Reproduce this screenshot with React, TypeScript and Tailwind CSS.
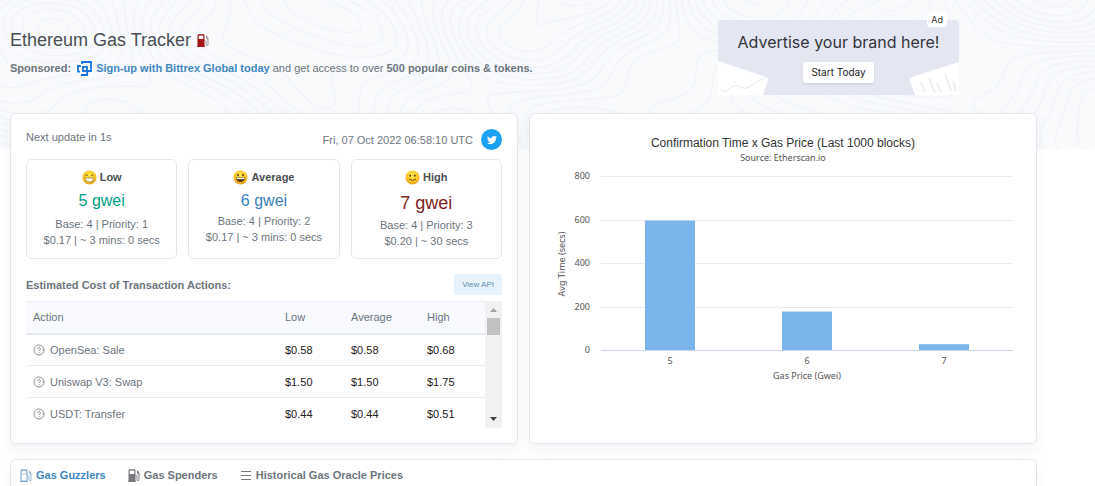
import { CircleHelp } from 'lucide-react'
import { FaTwitter } from 'react-icons/fa'

const oracle = [
  {
    label: 'Low',
    mood: 'beaming',
    price: '5 gwei',
    priceClass: 'mb-[3px] text-base leading-6 text-[#00a186]',
    base: 'Base: 4 | Priority: 1',
    cost: '$0.17 | ~ 3 mins: 0 secs',
  },
  {
    label: 'Average',
    mood: 'grinning',
    price: '6 gwei',
    priceClass: 'text-base leading-6 text-[#3a80ba]',
    base: 'Base: 4 | Priority: 2',
    cost: '$0.17 | ~ 3 mins: 0 secs',
  },
  {
    label: 'High',
    mood: 'smiling',
    price: '7 gwei',
    priceClass: 'text-lg leading-7 text-[#7d2323]',
    base: 'Base: 4 | Priority: 3',
    cost: '$0.20 | ~ 30 secs',
  },
]

const actions = [
  { name: 'OpenSea: Sale', low: '$0.58', average: '$0.58', high: '$0.68' },
  { name: 'Uniswap V3: Swap', low: '$1.50', average: '$1.50', high: '$1.75' },
  { name: 'USDT: Transfer', low: '$0.44', average: '$0.44', high: '$0.51' },
]

const confirmations = [
  { gwei: 5, secs: 595 },
  { gwei: 6, secs: 177 },
  { gwei: 7, secs: 27 },
]

const TERRAIN = { width: 1100, height: 150, cell: 5 }

function elevation(x: number, y: number) {
  return (
    Math.sin(x / 71 + Math.sin(y / 57) * 1.3) * 2.1 +
    Math.cos(y / 49 - x / 87) * 2 +
    Math.sin((x + y) / 41) * 0.7 +
    Math.cos((x - 2 * y) / 33) * 0.5
  )
}

// marching squares over the elevation field
function contourPath() {
  const { width, height, cell } = TERRAIN
  let d = ''
  for (let x = 0; x < width; x += cell) {
    for (let y = 0; y < height; y += cell) {
      const corners = [
        [x, y],
        [x + cell, y],
        [x + cell, y + cell],
        [x, y + cell],
      ]
      const heights = corners.map(([cx, cy]) => elevation(cx, cy))
      for (let level = -5; level <= 5; level += 0.5) {
        const hits: string[] = []
        for (let i = 0; i < 4; i++) {
          const j = (i + 1) % 4
          if (heights[i] < level !== heights[j] < level) {
            const t = (level - heights[i]) / (heights[j] - heights[i])
            const px = corners[i][0] + (corners[j][0] - corners[i][0]) * t
            const py = corners[i][1] + (corners[j][1] - corners[i][1]) * t
            hits.push(`${px.toFixed(1)} ${py.toFixed(1)}`)
          }
        }
        for (let i = 0; i + 1 < hits.length; i += 2) d += `M${hits[i]}L${hits[i + 1]}`
      }
    }
  }
  return d
}

const contours = contourPath()

function Topography() {
  return (
    <svg
      aria-hidden="true"
      className="absolute inset-0 h-full w-full"
      viewBox="0 0 1095 149"
      preserveAspectRatio="xMidYMid slice"
    >
      <path d={contours} fill="none" stroke="#f1f3f6" strokeWidth="1.2" />
    </svg>
  )
}

function PumpIcon({ body, hose, filled }: { body: string; hose: string; filled?: boolean }) {
  return (
    <svg aria-hidden="true" width="12" height="13" viewBox="0 0 12 13" fill="none">
      <path d="M1 .8h6v11.4H1z" fill={filled ? body : 'none'} stroke={body} />
      <path d="M1.7 1.6h4.6v3.4H1.7z" fill="#fff" stroke={filled ? 'none' : body} strokeWidth=".6" />
      <path d="M0 12.3h8" stroke={body} />
      <path
        d="M7.5 6.5h.8q.7 0 .7.8v3.3q0 1 1 1t1-1V4.2L9.2 1.6M9.5 2v2.4q0 .8 1.5.8"
        stroke={hose}
        strokeWidth=".8"
      />
    </svg>
  )
}

function BittrexLogo() {
  return (
    <svg
      aria-hidden="true"
      className="shrink-0"
      width="15"
      height="15"
      viewBox="0 0 15 15"
      fill="none"
      stroke="#1673e0"
      strokeWidth="1.8"
    >
      <path d="M5 3V1h9v9H6V5.8h4V10" />
      <path d="M3.8 5H1v5.6h2M4 14h6.2v-3" />
    </svg>
  )
}

function Emoji({ mood }: { mood: string }) {
  return (
    <svg aria-hidden="true" width="15" height="15" viewBox="0 0 15 15">
      <defs>
        <radialGradient id={`face-${mood}`} cx=".5" cy=".35" r=".65">
          <stop offset="0" stopColor="#ffe94f" />
          <stop offset=".6" stopColor="#fbc928" />
          <stop offset="1" stopColor="#e79a1d" />
        </radialGradient>
      </defs>
      <circle cx="7.5" cy="7.5" r="7" fill={`url(#face-${mood})`} />
      {mood === 'beaming' && (
        <>
          <path
            d="M3.4 5.6q1.3-1.7 2.7 0M8.9 5.6q1.3-1.7 2.7 0"
            fill="none"
            stroke="#5b4015"
            strokeWidth=".8"
          />
          <path d="M3.2 8h8.6q-.5 4-4.3 4T3.2 8z" fill="#fff" stroke="#8b6a2b" strokeWidth=".6" />
        </>
      )}
      {mood === 'grinning' && (
        <>
          <ellipse cx="5" cy="5" rx=".8" ry="1.2" fill="#4a3415" />
          <ellipse cx="10" cy="5" rx=".8" ry="1.2" fill="#4a3415" />
          <path d="M2.8 7.6h9.4q-.5 4.4-4.7 4.4T2.8 7.6z" fill="#5b3512" />
          <path d="M3.6 7.8h7.8v1.3H3.6z" fill="#fff" />
        </>
      )}
      {mood === 'smiling' && (
        <>
          <ellipse cx="5.3" cy="5.6" rx=".8" ry="1.2" fill="#4a3415" />
          <ellipse cx="9.7" cy="5.6" rx=".8" ry="1.2" fill="#4a3415" />
          <path d="M4 9q3.5 2.8 7 0" fill="none" stroke="#5b3f14" strokeWidth=".9" />
        </>
      )}
    </svg>
  )
}

function AdBanner() {
  return (
    <aside className="relative mr-[78px] flex h-[75px] w-[241px] shrink-0 flex-col items-center rounded-sm bg-[#e4e7f2] pt-3 font-['Inter',sans-serif]">
      <svg
        aria-hidden="true"
        className="absolute inset-0"
        width="241"
        height="75"
        viewBox="0 0 241 75"
        fill="none"
      >
        <path d="M0 41l48 16q3 1 2 3l-5 15H0z" fill="#fff" />
        <path d="M2 69q5 5 9 0 6-6 11-2 5 3 9 0 5-5 16-9" stroke="#e7e9f0" />
        <path d="M241 42l-47 15q-3 1-2 4l5 14h44z" fill="#fff" />
        <path d="M203 62l4 10M211 58l6 15M219 63l4 10M227 53l6 18M235 61l3 10" stroke="#eceef4" strokeWidth="2" />
      </svg>
      <span className="absolute -top-2 right-3 rounded bg-white px-1 text-[9px] leading-[15px] text-[#333]">
        Ad
      </span>
      <p className="relative text-base leading-5 text-[#33343c]">Advertise your brand here!</p>
      <a
        href="#advertise"
        className="relative mt-[10px] rounded-xs bg-white px-2 text-[10px] leading-[21px] text-[#222] shadow-sm"
      >
        Start Today
      </a>
    </aside>
  )
}

function GasOracle() {
  return (
    <section className="rounded-md border border-[#e3e7ed] bg-white p-[15px] shadow-[0_6px_12px_rgba(189,197,209,0.2)]">
      <div className="flex items-start justify-between">
        <p className="leading-4">Next update in 1s</p>
        <div className="flex items-center gap-2">
          <time>Fri, 07 Oct 2022 06:58:10 UTC</time>
          <a
            href="#tweet"
            aria-label="Share on Twitter"
            className="flex size-[21px] items-center justify-center rounded-full bg-[#1da1f2] text-white"
          >
            <FaTwitter size={10} />
          </a>
        </div>
      </div>

      <div className="mt-[9px] grid grid-cols-3 gap-[11px]">
        {oracle.map((tier) => (
          <div
            key={tier.label}
            className="rounded-md border border-[#e3e7ed] pt-2 pb-[9px] text-center leading-4"
          >
            <h2 className="mb-[3px] flex h-[18px] items-center justify-center gap-[3px] font-bold text-[#4a4f55]">
              <Emoji mood={tier.mood} />
              {tier.label}
            </h2>
            <p className={tier.priceClass}>{tier.price}</p>
            <p>{tier.base}</p>
            <p>{tier.cost}</p>
          </div>
        ))}
      </div>

      <div className="mt-[15px] flex items-center justify-between">
        <h3 className="font-bold">Estimated Cost of Transaction Actions:</h3>
        <a
          href="#api"
          className="rounded-xs bg-[#e7f3fc] px-2 text-[8px] leading-[21px] text-[#5f8fb8]"
        >
          View API
        </a>
      </div>

      <div className="mt-[6px] flex h-[127px] overflow-hidden">
        <table className="w-full table-fixed self-start text-left">
          <thead>
            <tr className="h-8 border-t border-b-2 border-[#e7eaf3] bg-[#f8fafd]">
              <th className="pl-[7px] font-normal">Action</th>
              <th className="w-[66px] pl-[7px] font-normal">Low</th>
              <th className="w-[76px] pl-[7px] font-normal">Average</th>
              <th className="w-[65px] pl-[7px] font-normal">High</th>
            </tr>
          </thead>
          <tbody>
            {actions.map((action) => (
              <tr key={action.name} className="h-8 border-b border-[#e7eaf3] text-[#1e2022] last:border-0">
                <td className="pl-[7px] text-[#6c757e]">
                  <span className="flex items-center gap-[5px]">
                    <CircleHelp size={12} strokeWidth={1.6} />
                    {action.name}
                  </span>
                </td>
                <td className="pl-[7px]">{action.low}</td>
                <td className="pl-[7px]">{action.average}</td>
                <td className="pl-[7px]">{action.high}</td>
              </tr>
            ))}
          </tbody>
        </table>
        <div
          aria-hidden="true"
          className="flex w-[17px] shrink-0 flex-col items-center bg-[#f1f1f1]"
        >
          <svg width="17" height="17" viewBox="0 0 17 17">
            <path d="M5 11l3.5-4 3.5 4z" fill="#a3a3a3" />
          </svg>
          <div className="h-[17px] w-[13px] bg-[#c1c1c1]" />
          <svg className="mt-auto" width="17" height="17" viewBox="0 0 17 17">
            <path d="M5 6l3.5 4L12 6z" fill="#404040" />
          </svg>
        </div>
      </div>
    </section>
  )
}

function ConfirmationChart() {
  const plot = { left: 71, top: 62, width: 412, height: 174, max: 800 }
  const bottom = plot.top + plot.height
  const slot = plot.width / confirmations.length

  return (
    <section className="rounded-md border border-[#e3e7ed] bg-white shadow-[0_6px_12px_rgba(189,197,209,0.2)]">
      <svg
        role="img"
        aria-label="Confirmation time by gas price"
        className="block w-full font-['Noto_Sans',sans-serif]"
        viewBox="0 0 506 329"
        fontSize="9"
        fill="#555"
        textAnchor="middle"
      >
        <text x="253" y="33" fontSize="12" fill="#333" className="font-['Liberation_Sans',Arial,sans-serif]">
          Confirmation Time x Gas Price (Last 1000 blocks)
        </text>
        <text x="253" y="47">
          Source: Etherscan.io
        </text>
        {[0, 200, 400, 600, 800].map((tick) => {
          const y = Math.round(bottom - (tick / plot.max) * plot.height)
          return (
            <g key={tick}>
              <path
                d={`M${plot.left} ${y + 0.5}h${plot.width}`}
                stroke={tick === 0 ? '#ccd6eb' : '#ebebeb'}
              />
              <text x="60" y={y + 3} textAnchor="end">
                {tick}
              </text>
            </g>
          )
        })}
        {confirmations.map(({ gwei, secs }, i) => {
          const center = Math.round(plot.left + slot * (i + 0.5))
          const height = (secs / plot.max) * plot.height
          return (
            <g key={gwei}>
              <rect x={center - 25} y={bottom - height} width="50" height={height} fill="#7cb5ec" />
              <text x={center} y={bottom + 14}>
                {gwei}
              </text>
            </g>
          )
        })}
        <text transform="translate(35 150) rotate(-90)">Avg Time (secs)</text>
        <text x={plot.left + plot.width / 2} y="265">
          Gas Price (Gwei)
        </text>
      </svg>
    </section>
  )
}

export default function App() {
  return (
    <div className="bg-white font-['Liberation_Sans',Arial,sans-serif] text-[11px] leading-4 text-[#6c757e]">
      <header className="relative bg-[#f8fafc]">
        <Topography />
        <div className="relative flex justify-between pt-5 pr-[58px] pb-[54px] pl-[10px]">
          <div className="pt-2">
            <h1 className="flex items-center gap-[6px] text-lg leading-6 text-[#4a4f55]">
              Ethereum Gas Tracker
              <PumpIcon body="#a31515" hose="#8a7f7f" filled />
            </h1>
            <p className="mt-2 flex items-center gap-1 whitespace-nowrap">
              <b className="mr-[2px]">Sponsored:</b>
              <BittrexLogo />
              <span>
                <a href="#bittrex" className="font-bold text-[#3f87bf]">
                  Sign-up with Bittrex Global today
                </a>{' '}
                and get access to over <b>500 popular coins &amp; tokens.</b>
              </span>
            </p>
          </div>
          <AdBanner />
        </div>
      </header>

      <main className="relative -mt-9 pr-[58px] pl-[10px]">
        <div className="grid grid-cols-2 gap-[11px]">
          <GasOracle />
          <ConfirmationChart />
        </div>

        <nav className="mt-[15px] flex gap-[22px] rounded-t-md border border-b-0 border-[#e3e7ed] bg-white px-[9px] pt-[7px] pb-1 font-bold shadow-[0_6px_12px_rgba(189,197,209,0.2)]">
          <a href="#guzzlers" className="flex items-center gap-1 text-[#3f87bf]">
            <PumpIcon body="#7ba6c8" hose="#7ba6c8" />
            Gas Guzzlers
          </a>
          <a href="#spenders" className="flex items-center gap-1">
            <PumpIcon body="#77797c" hose="#55585c" filled />
            Gas Spenders
          </a>
          <a href="#history" className="flex items-center gap-1">
            <svg aria-hidden="true" width="12" height="12" viewBox="0 0 12 12">
              <path d="M1 2.5h10M1 6.5h10M1 10.5h10" stroke="#77797c" />
            </svg>
            Historical Gas Oracle Prices
          </a>
        </nav>
      </main>
    </div>
  )
}
